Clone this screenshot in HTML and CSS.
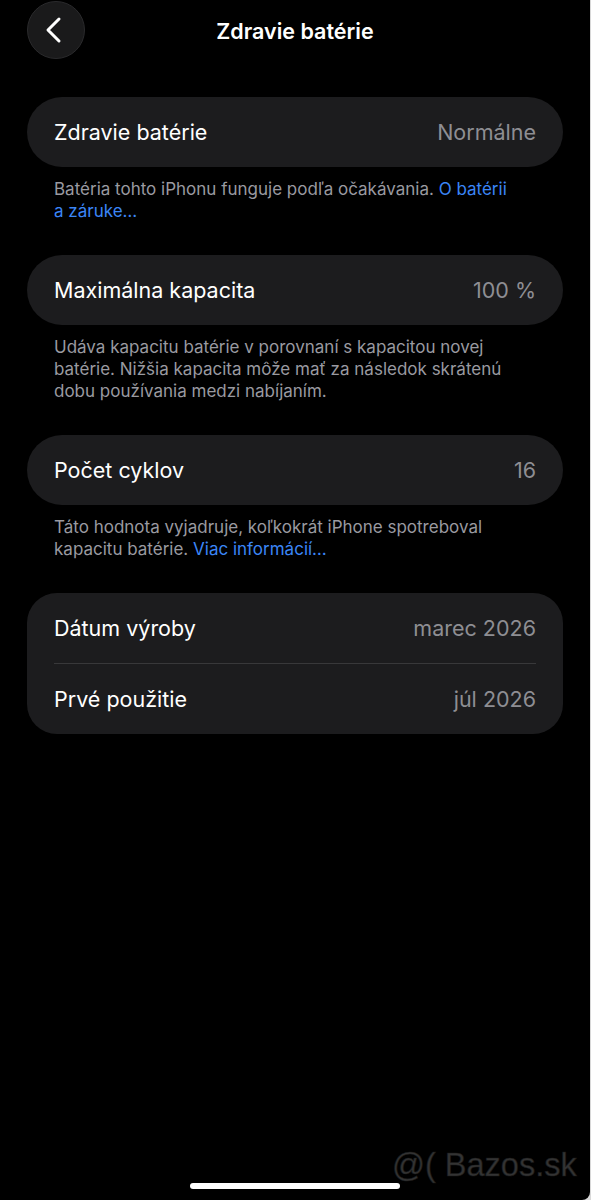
FILE: index.html
```html
<!DOCTYPE html>
<html lang="sk">
<head>
<meta charset="utf-8">
<title>Zdravie batérie</title>
<link rel="stylesheet" href="styles.css">
</head>
<body>
<div class="screen">
  <header class="nav">
    <button class="back" aria-label="Späť">
      <svg width="20" height="28" viewBox="0 0 20 28"><path d="M15 3 L4 14 L15 25" fill="none" stroke="#fff" stroke-width="3" stroke-linecap="round" stroke-linejoin="round"/></svg>
    </button>
    <h1 class="title">Zdravie batérie</h1>
  </header>

  <main class="content">
    <section class="group">
      <div class="card">
        <div class="row"><span class="label">Zdravie batérie</span><span class="value">Normálne</span></div>
      </div>
      <p class="note">Batéria tohto iPhonu funguje podľa očakávania. <a class="link">O batérii a záruke…</a></p>
    </section>

    <section class="group">
      <div class="card">
        <div class="row"><span class="label">Maximálna kapacita</span><span class="value">100 %</span></div>
      </div>
      <p class="note">Udáva kapacitu batérie v porovnaní s kapacitou novej batérie. Nižšia kapacita môže mať za následok skrátenú dobu používania medzi nabíjaním.</p>
    </section>

    <section class="group">
      <div class="card">
        <div class="row"><span class="label">Počet cyklov</span><span class="value">16</span></div>
      </div>
      <p class="note">Táto hodnota vyjadruje, koľkokrát iPhone spotreboval kapacitu batérie. <a class="link">Viac informácií…</a></p>
    </section>

    <section class="group">
      <div class="card card-tall">
        <div class="row"><span class="label">Dátum výroby</span><span class="value">marec 2026</span></div>
        <div class="divider"></div>
        <div class="row"><span class="label">Prvé použitie</span><span class="value">júl 2026</span></div>
      </div>
    </section>
  </main>

  <div class="home-indicator"></div>
  <div class="watermark">@( Bazos.sk</div>
</div>
</body>
</html>
```

FILE: styles.css
```css
* { box-sizing: border-box; }

html, body {
  margin: 0;
  padding: 0;
}

body {
  background: #d8d8d8;
  font-family: Inter, "Noto Sans", "Liberation Sans", sans-serif;
}

.screen {
  position: relative;
  width: 590px;
  height: 1200px;
  background: #000;
  border-bottom-right-radius: 8px;
  overflow: hidden;
  display: flex;
  flex-direction: column;
}

.nav {
  position: relative;
  height: 60px;
  display: flex;
  align-items: center;
  justify-content: center;
  padding-top: 1px;
}

.back {
  position: absolute;
  left: 27px;
  top: 1px;
  width: 58px;
  height: 58px;
  border-radius: 50%;
  background: #1a1a1b;
  border: 1px solid #2a2a2c;
  display: flex;
  align-items: center;
  justify-content: center;
  padding: 0 4px 0 0;
  cursor: pointer;
}

.title {
  margin: 0;
  color: #fff;
  font-size: 21.5px;
  font-weight: 600;
  letter-spacing: 0;
}

.content {
  padding: 37px 27px 0 27px;
  display: flex;
  flex-direction: column;
}

.group {
  margin-bottom: 33px;
}

.card {
  background: #1c1c1e;
  border-radius: 35px;
  padding: 0 27px;
}

.card-tall {
  border-radius: 30px;
}

.row {
  height: 70px;
  display: flex;
  align-items: center;
  justify-content: space-between;
  font-size: 21.5px;
}

.label {
  color: #fff;
}

.value {
  color: #8e8e93;
}

.divider {
  height: 1px;
  background: #38383a;
}

.note {
  margin: 0;
  padding: 11px 44px 0 27px;
  color: #9a9aa0;
  font-size: 17px;
  line-height: 22px;
}

.link {
  color: #3b86f7;
}

.home-indicator {
  position: absolute;
  left: 190px;
  top: 1183px;
  width: 210px;
  height: 6px;
  border-radius: 3px;
  background: #fff;
}

.watermark {
  position: absolute;
  left: 392px;
  top: 1147px;
  font-family: "Liberation Sans", Arial, sans-serif;
  font-size: 32.5px;
  color: #333;
  -webkit-text-stroke: 0.6px #1a1a1a;
  white-space: nowrap;
}
```
